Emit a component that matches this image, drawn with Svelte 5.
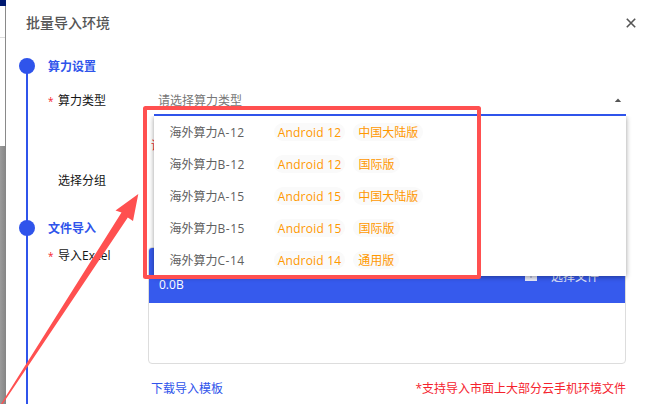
<script lang="ts">
	interface Option {
		name: string;
		android: string;
		region: string;
	}

	const options: Option[] = [
		{ name: 'A-12', android: 'Android 12', region: '中国大陆版' },
		{ name: 'B-12', android: 'Android 12', region: '国际版' },
		{ name: 'A-15', android: 'Android 15', region: '中国大陆版' },
		{ name: 'B-15', android: 'Android 15', region: '国际版' },
		{ name: 'C-14', android: 'Android 14', region: '通用版' }
	];

	let open = $state(true);
	let selected: Option | null = $state(null);

	function choose(option: Option) {
		selected = option;
		open = false;
	}
</script>

<div class="page">
	<div class="backdrop">
		<div class="topbar"></div>
		<div class="panel"></div>
		<div class="shade"></div>
	</div>

	<div class="dialog">
		<header>
			<h1>批量导入环境</h1>
			<button class="close" aria-label="关闭">
				<svg width="10" height="10" viewBox="0 0 10 10">
					<path d="M0.8 0.8 9.2 9.2M9.2 0.8 0.8 9.2" stroke="#555" stroke-width="1.6" />
				</svg>
			</button>
		</header>

		<div class="steps">
			<section class="compute">
				<div class="rail"><i></i></div>
				<div class="content">
					<h2>算力设置</h2>
					<div class="field">
						<span class="label first"><b>*</b>算力类型</span>
						<div class="control">
							<button class="select" onclick={() => (open = !open)}>
								<span>{selected ? '海外算力' + selected.name : '请选择算力类型'}</span>
								<svg width="8" height="4" viewBox="0 0 8 4">
									<path d="M0.8 4 4 0.4 7.2 4z" fill="#555" />
								</svg>
							</button>
							{#if open}
								<div class="menu">
									{#each options as option}
										<button class="option" onclick={() => choose(option)}>
											<span class="name">海外算力<em>{option.name}</em></span>
											<span class="tag android">{option.android}</span>
											<span class="tag">{option.region}</span>
										</button>
									{/each}
								</div>
							{/if}
						</div>
					</div>
					<p class="error">请选择算力类型</p>
					<div class="field group"><span class="label">选择分组</span></div>
				</div>
			</section>

			<section class="files">
				<div class="rail"><i></i></div>
				<div class="content">
					<h2>文件导入</h2>
					<div class="field upload-field">
						<span class="label excel"><b>*</b>导入Excel</span>
						<div class="upload">
							<div class="upload-head">
								<span class="size">0.0B</span>
								<span class="pick">
									<svg width="12" height="12" viewBox="0 0 12 12">
										<path d="M0 0h12v12H0z" fill="#e8ebfa" />
										<path d="M6 3v6M3 6h6" stroke="#8e98c8" />
									</svg>
									选择文件
								</span>
							</div>
						</div>
					</div>
					<div class="notes">
						<a href="#template">下载导入模板</a>
						<span>*支持导入市面上大部分云手机环境文件</span>
					</div>
				</div>
			</section>
		</div>
	</div>

	<svg class="marker" width="666" height="404" viewBox="0 0 666 404">
		<rect x="145" y="108" width="334" height="169" rx="0.5" />
		<path d="M1 404 L121.5 212.5 L115.5 210.5 L138.3 194 L133 221 L127.8 217.5 L2.6 404z" />
	</svg>
</div>

<style>
	:global(body) {
		margin: 0;
		overflow: hidden;
	}

	.page {
		position: relative;
		display: flex;
		width: 666px;
		height: 404px;
		overflow: hidden;
		background: #fff;
		font: 12px/16px 'Open Sans', 'Noto Sans CJK SC', sans-serif;
		color: #151515;
	}

	button {
		padding: 0;
		border: none;
		background: none;
		font: inherit;
		cursor: pointer;
	}

	h1,
	h2,
	p {
		margin: 0;
	}

	.backdrop {
		display: flex;
		flex-direction: column;
		box-sizing: border-box;
		width: 6px;
		border-right: 1px solid #8a8a8a;
	}

	.topbar {
		height: 6px;
		margin-right: -1px;
		background: #001a70;
	}

	.panel {
		height: 31px;
		border-bottom: 1px solid #ddd;
	}

	.shade {
		flex: 1;
		margin: 108px -1px 0 0;
		background: linear-gradient(to right, #9b9b9b, #858585);
	}

	.dialog {
		width: 660px;
		background: #fff;
	}

	header {
		display: flex;
		justify-content: space-between;
		align-items: center;
		height: 46px;
		padding: 0 30px 0 20px;
	}

	h1 {
		font-size: 14px;
		font-weight: 500;
		color: #555;
	}

	.close {
		display: flex;
	}

	.steps {
		padding-top: 12px;
	}

	section {
		display: flex;
		padding-left: 13px;
	}

	.compute {
		height: 162px;
	}

	.files {
		height: 184px;
	}

	.rail {
		display: flex;
		justify-content: center;
		width: 16px;
		background: linear-gradient(#2f54eb, #2f54eb) center / 2px 100% no-repeat;
	}

	.compute .rail {
		background-position: 7px 8px;
	}

	.rail i {
		width: 16px;
		height: 16px;
		border-radius: 50%;
		background: #2f54eb;
	}

	.content {
		flex: 1;
		padding: 0 40px 0 13px;
	}

	h2 {
		box-sizing: border-box;
		height: 16px;
		padding-top: 1px;
		font-size: 12px;
		font-weight: 700;
		color: #2f54eb;
	}

	.field {
		display: flex;
		margin-top: 10px;
	}

	.label {
		box-sizing: border-box;
		width: 106px;
		padding-left: 10px;
		line-height: 32px;
		white-space: nowrap;
	}

	.label.first {
		height: 32px;
		line-height: 34px;
	}

	.label b {
		display: inline-block;
		width: 10px;
		margin-left: -10px;
		font-size: 10px;
		font-weight: 400;
		line-height: 1;
		color: #f5222d;
	}

	.control {
		position: relative;
		flex: 1;
	}

	.select {
		display: flex;
		justify-content: space-between;
		align-items: center;
		box-sizing: border-box;
		width: 100%;
		height: 32px;
		padding: 2px 4px 0;
		border-bottom: 2px solid #2f54eb;
		color: #777;
	}

	.select span {
		padding-top: 2px;
	}

	.menu {
		position: absolute;
		top: 32px;
		left: 0;
		right: 0;
		z-index: 2;
		background: #fff;
		box-shadow: 0 1px 5px rgba(0, 0, 0, 0.4);
		clip-path: inset(0 -8px -8px);
	}

	.option {
		display: flex;
		align-items: center;
		width: 100%;
		height: 32px;
		padding-left: 15.5px;
		color: #606060;
	}

	.name {
		padding-top: 2px;
		margin-right: 29px;
	}

	em {
		font-style: normal;
		letter-spacing: 0.5px;
	}

	.tag {
		box-sizing: border-box;
		height: 18px;
		margin-right: 8px;
		padding: 1px 5px 0;
		border-radius: 9px;
		background: #fafafa;
		line-height: 18px;
		color: #ff9800;
	}

	.android {
		padding: 1px 4px 0;
		font-weight: 500;
		letter-spacing: 0.2px;
	}

	.error {
		margin: 22px 0 0 103px;
		color: #f5222d;
	}

	.group {
		margin-top: 11px;
	}

	.upload-field {
		margin-top: 11px;
	}

	.excel {
		width: 100px;
		line-height: 17px;
	}

	.files .label {
		flex: none;
	}

	.upload {
		flex: 1;
		box-sizing: border-box;
		height: 117px;
		border: 1px solid #ddd;
		border-radius: 4px;
		overflow: hidden;
	}

	.upload-head {
		display: flex;
		justify-content: space-between;
		height: 55px;
		background: #365aed;
		color: #fff;
	}

	.size {
		padding: 29px 0 0 10px;
		font-weight: 500;
	}

	.pick {
		display: flex;
		gap: 14px;
		padding: 21px 26px 0 0;
		color: #e8ebfa;
	}

	.notes {
		display: flex;
		justify-content: space-between;
		margin: 17px 0 0 103px;
	}

	.notes a {
		color: #2f54eb;
		text-decoration: none;
	}

	.notes span {
		color: #f5222d;
	}

	.marker {
		position: absolute;
		inset: 0;
		z-index: 3;
		pointer-events: none;
	}

	.marker rect {
		fill: none;
		stroke: #ff5050;
		stroke-width: 4;
	}

	.marker path {
		fill: #ff5050;
	}
</style>
